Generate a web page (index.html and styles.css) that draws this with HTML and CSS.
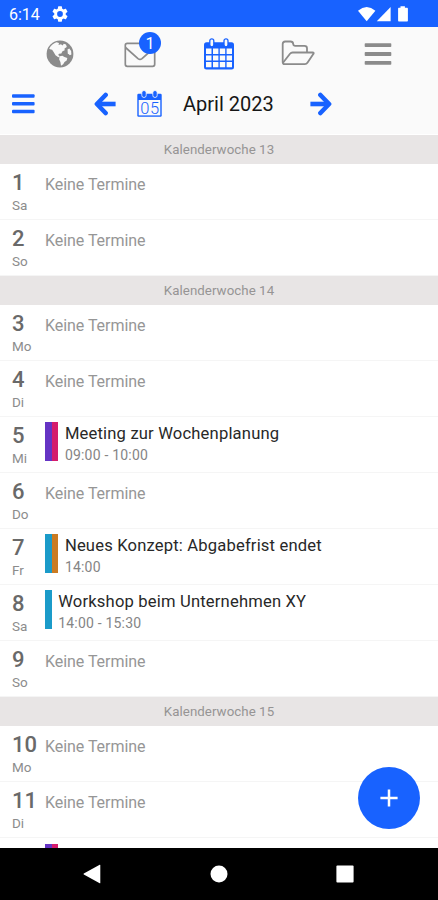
FILE: index.html
```html
<!DOCTYPE html>
<html lang="de">
<head>
<meta charset="utf-8">
<title>Kalender</title>
<link rel="stylesheet" href="styles.css">
</head>
<body>
<div class="phone">
  <header class="status">
    <span class="clock">6:14</span>
    <svg class="gear" width="16" height="16" viewBox="2 2 20 20"><path fill="#fff" d="M19.14 12.94c.04-.3.06-.61.06-.94s-.02-.64-.07-.94l2.03-1.58a.49.49 0 0 0 .12-.61l-1.92-3.32a.49.49 0 0 0-.59-.22l-2.39.96a7 7 0 0 0-1.62-.94l-.36-2.54a.48.48 0 0 0-.48-.41h-3.84a.48.48 0 0 0-.47.41l-.36 2.54c-.59.24-1.13.57-1.62.94l-2.39-.96a.48.48 0 0 0-.59.22L2.74 8.87a.48.48 0 0 0 .12.61l2.03 1.58c-.05.3-.09.63-.09.94s.02.64.07.94l-2.03 1.58a.49.49 0 0 0-.12.61l1.92 3.32c.12.22.37.29.59.22l2.39-.96c.5.38 1.03.7 1.62.94l.36 2.54c.05.24.24.41.48.41h3.84c.24 0 .44-.17.47-.41l.36-2.54a7 7 0 0 0 1.62-.94l2.39.96c.22.08.47 0 .59-.22l1.92-3.32a.48.48 0 0 0-.12-.61zM12 15.6a3.6 3.6 0 1 1 0-7.2 3.6 3.6 0 0 1 0 7.2z"/></svg>
    <svg class="signals" width="52" height="18" viewBox="0 0 52 18" fill="#fff"><path d="M0 5.7Q8.7-1.6 17.4 5.7L8.7 16.2z"/><path d="M18.8 16.2H32.6V2z"/><path d="M42.5 1.2h4.4v1.6h2c.6 0 1 .4 1 1v11.6c0 .6-.4 1-1 1h-7.8c-.6 0-1-.4-1-1V3.800c0-.6.400-1 1-1h1.400z"/></svg>
  </header>

  <nav class="tabs">
    <div class="tab">
      <svg width="28" height="28" viewBox="0 0 28 28"><circle cx="14" cy="14" r="13.400" fill="#8b8b8b"/><path fill="#fafafa" d="M3.200 8.500Q6 3.800 10.500 2.300L13 3l-.5 2 2.500-.8 1.500 1.300 1.300-1.700 2.200.6.8 2.600-2.300 1.500.2 1.800-2.200 1-1.200 2.200-2.300.2-.8 1.300 1.300 1 .2 1.500-1.700-.6-2.500-1.600-1.700-3-1.700-2.500-2.100-.5z"/><path fill="#fafafa" d="M13.800 16.300l2.500-.6 2.200 1.300 2.800 1-.6 2.400-2.200 1.600-1.300 2.300-2.200 1.400-.6-3.700-1.300-2.700z"/><path fill="#fafafa" d="M21.500 9.500l1.800-1 1.800 2.500.3 3.500-1.600.8-2-2z"/></svg>
    </div>
    <div class="tab">
      <div class="mail">
        <svg width="32" height="26" viewBox="0 0 32 26" fill="none" stroke="#8b8b8b" stroke-width="1.700" stroke-linejoin="round"><rect x="1.300" y="1.300" width="29.400" height="23" rx="2"/><path d="M1.500 5.500L14 16.600q2 1.400 4 0L30.500 5.500"/></svg>
        <span class="badge">1</span>
      </div>
    </div>
    <div class="tab">
      <svg width="30" height="32" viewBox="0 0 30 32"><rect x="0" y="4.300" width="30" height="27.200" rx="2.500" fill="#1862ff"/><path fill="#fafafa" d="M2 10.400h5.500v5.600H2zM9 10.400h5.400v5.600H9zM15.800 10.400h5.400v5.600h-5.400zM22.600 10.400h5.400v5.600h-5.400zM2 17.400h5.500v5H2zM9 17.400h5.400v5H9zM15.800 17.400h5.400v5h-5.400zM22.600 17.400h5.400v5h-5.400zM2 23.900h5.500v5.400H2zM9 23.900h5.400v5.400H9zM15.800 23.900h5.400v5.400h-5.400zM22.600 23.900h5.400v5.400h-5.400z"/><g fill="#fafafa" stroke="#1862ff" stroke-width="1.300"><rect x="5.800" y=".8" width="4" height="8" rx="2"/><rect x="20" y=".8" width="4" height="8" rx="2"/></g></svg>
    </div>
    <div class="tab">
      <svg class="folder" width="34" height="26" viewBox="0 0 34 26" fill="none" stroke="#8b8b8b" stroke-width="1.800" stroke-linejoin="round"><path d="M1.700 22V4Q1.700 1.500 4.200 1.500H9.500Q12 1.500 12.200 4q.2 1.900 2 1.900H23.500Q26 5.900 26 8.300v4.200"/><path d="M2.200 22.500L9 13.800q1-1.300 2.600-1.300H31.500q2 0 .8 1.600L26.600 22.500q-1 1.700-2.800 1.700H3.600Q1.700 24.200 1.700 22"/></svg>
    </div>
    <div class="tab">
      <svg width="28" height="24" viewBox="0 0 28 24" fill="#8b8b8b"><rect x=".7" y="1.200" width="26.600" height="3.900" rx=".8"/><rect x=".7" y="10.100" width="26.600" height="3.900" rx=".8"/><rect x=".7" y="18.900" width="26.600" height="3.900" rx=".8"/></svg>
    </div>
  </nav>

  <div class="toolbar">
    <svg class="menu" width="23" height="20" viewBox="0 0 23 20" fill="#1862ff"><rect y=".2" width="22.600" height="3.500" rx="1"/><rect y="8" width="22.600" height="3.500" rx="1"/><rect y="15.800" width="22.600" height="3.500" rx="1"/></svg>
    <svg class="prev" width="22" height="24" viewBox="0 0 22 24" fill="none" stroke="#1862ff" stroke-width="4.600" stroke-linecap="round" stroke-linejoin="round"><path d="M11.600 3L2.900 12l8.700 9"/><path stroke-linecap="butt" d="M4 12h17.600"/></svg>
    <svg class="today" width="25" height="28" viewBox="0 0 25 28"><path fill="#1862ff" d="M1.500 3.800h22q1.200 0 1.200 1.200v20.600q0 1.200-1.200 1.200h-22q-1.200 0-1.200-1.200V5q0-1.200 1.200-1.200z"/><path fill="#fafafa" d="M1.700 10h21.600v15.400H1.700z"/><g fill="#1862ff" stroke="#fafafa" stroke-width=".8"><rect x="4.800" y=".5" width="4.400" height="7" rx="2.200"/><rect x="15.800" y=".5" width="4.400" height="7" rx="2.200"/></g><text class="today-num" x="12.900" y="23.700" text-anchor="middle">05</text></svg>
    <h1 class="month">April 2023</h1>
    <svg class="next" width="22" height="24" viewBox="0 0 22 24" fill="none" stroke="#1862ff" stroke-width="4.600" stroke-linecap="round" stroke-linejoin="round"><path d="M10.400 3l8.700 9-8.700 9"/><path stroke-linecap="butt" d="M.4 12H18"/></svg>
  </div>

  <main class="agenda">
    <h2 class="week">Kalenderwoche 13</h2>
    <section class="day"><div class="date"><b>1</b><span>Sa</span></div><p class="none">Keine Termine</p></section>
    <section class="day"><div class="date"><b>2</b><span>So</span></div><p class="none">Keine Termine</p></section>
    <h2 class="week">Kalenderwoche 14</h2>
    <section class="day"><div class="date"><b>3</b><span>Mo</span></div><p class="none">Keine Termine</p></section>
    <section class="day"><div class="date"><b>4</b><span>Di</span></div><p class="none">Keine Termine</p></section>
    <section class="day"><div class="date"><b>5</b><span>Mi</span></div>
      <div class="event"><i class="bar purple"></i><i class="bar pink"></i><div class="info"><p class="title">Meeting zur Wochenplanung</p><p class="time">09:00 - 10:00</p></div></div></section>
    <section class="day"><div class="date"><b>6</b><span>Do</span></div><p class="none">Keine Termine</p></section>
    <section class="day"><div class="date"><b>7</b><span>Fr</span></div>
      <div class="event"><i class="bar blue"></i><i class="bar orange"></i><div class="info"><p class="title">Neues Konzept: Abgabefrist endet</p><p class="time">14:00</p></div></div></section>
    <section class="day"><div class="date"><b>8</b><span>Sa</span></div>
      <div class="event"><i class="bar blue"></i><div class="info"><p class="title">Workshop beim Unternehmen XY</p><p class="time">14:00 - 15:30</p></div></div></section>
    <section class="day"><div class="date"><b>9</b><span>So</span></div><p class="none">Keine Termine</p></section>
    <h2 class="week">Kalenderwoche 15</h2>
    <section class="day"><div class="date"><b>10</b><span>Mo</span></div><p class="none">Keine Termine</p></section>
    <section class="day"><div class="date"><b>11</b><span>Di</span></div><p class="none">Keine Termine</p></section>
    <section class="day"><div class="date"></div>
      <div class="event"><i class="bar purple"></i><i class="bar pink"></i></div></section>
  </main>

  <button class="fab" aria-label="Neuer Termin"><svg width="18" height="18" viewBox="0 0 18 18" stroke="#fff" stroke-width="2.500"><path d="M9 .4v17.200M.4 9h17.200"/></svg></button>

  <footer class="navbar">
    <svg width="18" height="20" viewBox="0 0 18 20"><path fill="#fff" d="M17.300 1v18q0 .5-.6.300L.8 10.500q-.6-.5 0-1L16.700.7q.6-.2.600.3z"/></svg>
    <svg width="18" height="18" viewBox="0 0 18 18"><circle cx="9" cy="9" r="8.500" fill="#fff"/></svg>
    <svg width="18" height="18" viewBox="0 0 18 18"><rect x=".4" y=".4" width="17.200" height="17.200" rx="1" fill="#fff"/></svg>
  </footer>
</div>
</body>
</html>
```
FILE: styles.css
```css
* { box-sizing: border-box; margin: 0; padding: 0; }

body { font-family: Roboto, sans-serif; background: #fff; }

.phone {
  position: relative;
  display: flex;
  flex-direction: column;
  width: 438px;
  height: 900px;
  overflow: hidden;
}

.status {
  display: flex;
  align-items: center;
  flex: none;
  height: 27px;
  padding: 1px 28px 0 9px;
  background: #1862ff;
  color: #fff;
}
.clock { width: 43px; font-size: 16px; letter-spacing: 0; }
.signals { margin-left: auto; }

.tabs {
  display: grid;
  grid-template-columns: repeat(5, 79.400px);
  justify-content: center;
  flex: none;
  height: 53px;
  background: #fafafa;
}
.tab { display: flex; align-items: center; justify-content: center; }
.folder { margin-bottom: 2px; }
.mail { position: relative; height: 26px; margin-top: 2px; }
.badge {
  position: absolute;
  left: 15.500px;
  top: -10px;
  width: 22px;
  height: 22px;
  border-radius: 50%;
  background: #1862ff;
  color: #fff;
  font-size: 16px;
  line-height: 23px;
  text-align: center;
}

.toolbar {
  display: flex;
  align-items: center;
  flex: none;
  height: 54px;
  padding: 0 12px 6px;
  background: #fafafa;
}
.prev { margin-left: 59px; }
.today { margin-left: 21px; }
.today-num { font-size: 16.500px; font-weight: 300; fill: #1862ff; letter-spacing: .6px; }
.month {
  width: 92px;
  margin-left: 21px;
  font-size: 20px;
  font-weight: 400;
  line-height: 24px;
  white-space: nowrap;
  color: #161616;
}
.next { margin-left: 35px; }

.agenda { flex: 1; min-height: 0; padding-top: .500px; overflow: hidden; background: #fff; }
.week {
  height: 29px;
  background: #e8e5e5;
  color: #969494;
  font-size: 13.300px;
  font-weight: 400;
  line-height: 30px;
  letter-spacing: .05px;
  text-align: center;
}
.day {
  display: grid;
  grid-template-columns: 33px 1fr;
  height: 56.070px;
  padding-left: 12px;
  border-bottom: 1px solid #f5f5f5;
}
.date { color: #696969; }
.date b {
  display: block;
  padding-top: 7px;
  font-size: 22px;
  font-weight: 500;
  line-height: 24px;
}
.date span {
  display: block;
  margin-top: 2px;
  font-size: 13.500px;
  line-height: 17px;
  color: #8c8c8c;
}
.none {
  padding-top: 11px;
  color: #969696;
  font-size: 16px;
  line-height: 20px;
  letter-spacing: -.05px;
}
.event { display: flex; padding-top: 5.500px; }
.bar { width: 6.700px; height: 39px; }
.purple { background: #6534c4; }
.pink { background: #d51c6c; }
.blue { background: #1b9bc9; }
.orange { background: #cb7b22; }
.info { padding: 1px 0 0 6.500px; }
.title {
  color: #282828;
  font-size: 16.600px;
  font-weight: 400;
  line-height: 22px;
  letter-spacing: .17px;
  white-space: nowrap;
}
.time { color: #858585; font-size: 14px; line-height: 20px; letter-spacing: .2px; }

.fab {
  position: absolute;
  left: 358px;
  top: 767px;
  display: flex;
  align-items: center;
  justify-content: center;
  width: 62px;
  height: 62px;
  border: 0;
  border-radius: 50%;
  background: #1862ff;
}

.navbar {
  display: flex;
  align-items: center;
  justify-content: space-between;
  flex: none;
  height: 52.500px;
  padding: 0 84px 0 83px;
  background: #000;
}
```
